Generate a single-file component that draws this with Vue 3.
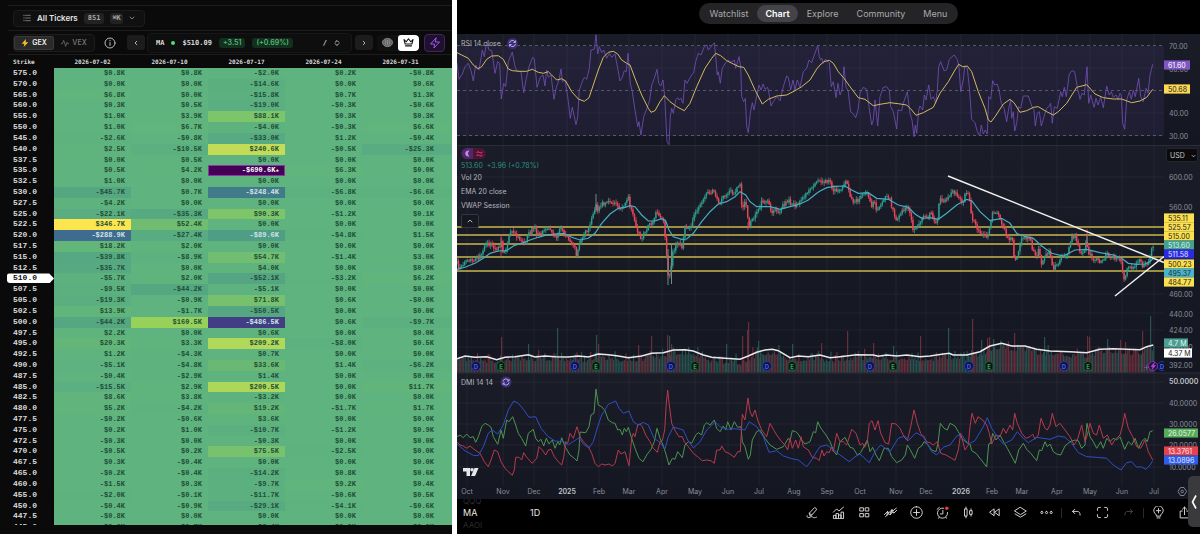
<script setup>
import { ref } from 'vue'

const expiries = ['2026-07-02', '2026-07-10', '2026-07-17', '2026-07-24', '2026-07-31']
const spot = '510.0'
const mode = ref('gex')
const tab = ref('Chart')
const tabs = ['Watchlist', 'Chart', 'Explore', 'Community', 'Menu']

const raw = `
575.0 $0.8K $0.8K -$2.0K $0.2K -$0.8K
570.0 $0.0K $0.0K -$14.6K $0.0K $0.6K
565.0 $6.8K $0.0K -$15.8K $0.7K $1.3K
560.0 $0.3K $0.5K -$19.0K -$0.3K -$0.6K
555.0 $1.0K $3.9K $88.1K $0.3K $0.3K
550.0 $1.0K $6.7K -$4.0K -$0.3K $6.6K
545.0 -$2.6K -$0.8K -$33.0K $1.2K -$0.4K
540.0 $2.5K -$10.5K $240.6K -$0.5K -$25.3K
537.5 $0.0K $0.5K $0.0K $0.0K $0.0K
535.0 $0.5K $4.2K -$690.6K $6.3K $0.0K
532.5 $1.0K $0.0K $0.0K $0.0K $0.0K
530.0 -$45.7K $0.7K -$248.4K -$6.8K -$6.6K
527.5 -$4.2K $0.0K $0.0K $0.0K $0.0K
525.0 -$22.1K -$35.3K $90.3K -$1.2K $0.1K
522.5 $346.7K $52.4K $0.0K $0.0K $0.0K
520.0 -$288.9K -$27.4K -$89.6K -$4.8K $1.5K
517.5 $18.2K $2.0K $0.0K $0.0K $0.0K
515.0 -$39.8K -$8.9K $54.7K -$1.4K $3.0K
512.5 -$35.7K $0.0K $4.0K $0.0K $0.0K
510.0 -$5.7K $2.0K -$52.1K -$3.2K $6.2K
507.5 -$9.5K -$44.2K -$5.1K $0.0K $0.0K
505.0 -$19.3K -$0.9K $71.8K $0.6K -$0.0K
502.5 $13.9K -$1.7K -$50.5K $0.0K $0.0K
500.0 -$44.2K $160.5K -$486.5K $0.6K -$9.7K
497.5 $2.2K $0.0K $0.6K $0.0K $0.0K
495.0 $20.3K $3.3K $209.2K -$8.0K $0.5K
492.5 $1.2K -$4.3K $0.7K $0.0K $0.0K
490.0 -$5.1K -$4.8K $33.6K $1.4K -$6.2K
487.5 -$0.4K -$2.9K $1.4K $0.0K $0.0K
485.0 -$15.5K $2.9K $200.5K $0.0K $11.7K
482.5 $8.6K $3.8K -$3.2K $0.0K $0.0K
480.0 $5.2K -$4.2K $19.2K -$1.7K $1.7K
477.5 -$0.2K -$0.6K $3.6K $0.0K $0.0K
475.0 $0.2K $1.0K -$10.7K -$1.2K $0.9K
472.5 -$0.3K $0.0K -$0.3K $0.0K $0.0K
470.0 -$0.5K $0.2K $75.5K -$2.5K $0.0K
467.5 $0.3K -$0.4K $0.0K $0.0K $0.0K
465.0 -$0.2K -$0.4K -$14.2K $0.8K $0.6K
460.0 -$1.5K $0.3K -$9.7K $9.2K $0.4K
455.0 -$2.0K -$0.1K -$11.7K -$0.6K $0.5K
450.0 -$0.4K -$0.9K -$29.1K -$4.1K -$0.6K
447.5 -$0.8K $0.0K $0.0K $0.0K $0.0K
445.0 -$0.6K $0.7K -$2.4K $0.0K $0.0K`

// viridis-like stops, in $K
const stops = [
  [-690, 68, 1, 84],
  [-486, 65, 62, 132],
  [-289, 63, 108, 142],
  [-248, 65, 123, 138],
  [-90, 80, 157, 134],
  [-40, 86, 168, 130],
  [0, 94, 179, 126],
  [20, 100, 182, 120],
  [90, 126, 197, 106],
  [160, 152, 209, 90],
  [240, 194, 220, 88],
  [347, 253, 229, 80],
]

function heat(v) {
  if (v <= stops[0][0]) return 'rgb(68, 1, 84)'
  for (let i = 1; i < stops.length; i++) {
    const a = stops[i - 1]
    const b = stops[i]
    if (v <= b[0]) {
      const t = (v - a[0]) / (b[0] - a[0])
      return `rgb(${[1, 2, 3].map((k) => Math.round(a[k] + (b[k] - a[k]) * t)).join(', ')})`
    }
  }
  return 'rgb(253, 229, 80)'
}

const rows = raw
  .trim()
  .split('\n')
  .map((line) => {
    const [strike, ...vals] = line.split(' ')
    return {
      strike,
      cells: vals.map((text) => {
        const v = parseFloat(text.replace(/[$K]/g, ''))
        return { text, bg: heat(v), light: v < -80, king: v < -600 }
      }),
    }
  })

// --- chart series -------------------------------------------------------
// Points are in thirds of a unit; the second half of each series starts at SPLIT.
const SPLIT = 1095
const parse = (s) => s.trim().split(/\s+/).map((p) => p.split(',').map(Number))
function series(left, right, top) {
  return [...parse(left), ...parse(right).map(([x, y]) => [x + SPLIT, y])].map(([x, y]) => [
    455 + x / 3,
    top + y / 3,
  ])
}
const poly = (pts) => pts.map(([x, y]) => `${x.toFixed(1)},${y.toFixed(1)}`).join(' ')

const rsi = series(
  `6,190 12,238 22,222 30,200 40,190 48,212 55,243 62,195 68,205 72,210 82,150 88,170 95,125 102,150 110,152 120,220 128,185 134,190 139,297 146,250 152,260 160,185 172,156 180,200 186,214 198,215 206,278 214,235 222,200 233,172 238,176 246,262 256,232 264,225 270,258 275,210 280,232 288,225 297,298 304,262 312,240 318,207 322,245 330,240 338,290 346,355 352,322 363,374 368,350 373,270 382,245 388,232 395,238 403,205 408,150 418,148 423,104 428,162 433,140 440,158 446,150 455,175 463,160 470,172 480,162 488,205 495,243 502,232 508,212 514,215 519,160 526,250 532,275 540,330 548,380 552,365 558,405 566,350 574,330 584,300 590,255 598,235 606,208 611,250 617,258 624,240 629,290 636,425 642,434 646,350 650,325 655,340 662,300 668,293 672,300 678,295 684,310 690,240 696,250 704,235 712,222 716,218 722,185 730,160 738,165 748,140 755,135 760,150 768,140 778,128 782,170 787,225 790,215 796,250 802,205 812,188 820,180 828,187 838,180 842,205 852,170 857,200 860,290 866,305 871,295 875,380 880,398 886,340 892,308 897,330 904,295 912,255 918,270 924,252 930,268 938,262 942,280 948,318 955,305 965,290 975,302 985,260 995,228 1000,232 1007,270 1014,240 1020,270 1027,240 1035,262 1045,215 1055,205 1062,180 1070,188 1078,165 1088,137 1093,170`,
  `2,180 5,175 10,190 16,178 28,188 34,260 40,245 48,293 54,250 60,285 66,270 72,200 78,262 84,270 92,335 100,342 107,353 114,330 120,280 130,262 140,268 147,320 155,375 160,360 165,300 173,378 180,290 190,262 200,260 208,272 212,320 220,335 230,387 234,330 245,332 250,310 262,275 270,340 276,360 282,410 286,375 290,400 296,330 300,318 308,330 313,285 318,300 326,255 333,298 340,290 347,310 352,270 356,200 362,185 372,212 380,210 388,178 402,165 412,178 417,200 422,275 430,240 434,200 442,205 448,260 455,358 465,368 472,395 479,408 484,375 490,402 496,390 502,402 506,290 512,298 518,242 524,255 532,252 537,270 544,310 552,325 560,365 566,325 572,300 575,355 580,335 584,393 590,370 596,320 602,325 610,288 625,288 636,320 642,330 646,378 652,340 658,335 664,378 672,350 680,325 686,320 692,310 697,370 703,320 712,325 722,275 727,290 733,262 739,290 748,222 756,212 764,215 772,262 780,298 786,280 793,285 801,200 806,310 812,285 822,322 828,295 834,315 842,292 850,323 860,258 868,285 874,275 880,292 888,285 894,298 900,280 904,285 908,370 914,388 920,300 928,275 934,298 940,270 946,290 956,235 962,290 970,305 978,265 984,280 990,225 998,193`,
  0,
)
const rsiMa = series(
  `6,158 20,165 40,175 55,195 68,206 80,200 95,178 110,168 130,167 145,178 160,207 172,212 195,214 215,214 232,208 250,217 265,220 280,215 290,225 305,240 320,236 332,243 350,275 370,297 388,304 402,293 415,255 430,210 445,172 460,157 475,154 488,162 500,180 515,190 525,195 540,235 560,285 580,325 588,337 600,332 615,305 628,287 645,305 665,320 688,332 705,310 725,260 750,205 770,175 782,160 797,167 815,182 835,192 852,200 866,202 880,225 900,270 922,312 940,298 965,288 995,285 1020,272 1040,260 1065,240 1085,207`,
  `0,195 12,185 28,181 40,190 55,215 72,235 90,260 115,293 135,298 160,317 180,313 210,308 235,311 260,315 275,330 288,346 310,338 340,322 360,280 385,245 405,210 416,193 428,200 442,198 455,215 475,275 495,325 505,360 513,366 525,350 550,312 570,298 582,308 600,337 620,332 640,322 655,320 680,335 700,345 715,335 740,310 770,262 800,254 825,282 850,293 880,297 905,297 935,308 960,303 980,292 998,268`,
  0,
)
const price = series(
  `6,370 12,388 20,372 30,368 40,366 48,360 58,365 66,355 75,350 85,325 92,308 98,312 106,312 115,322 124,328 133,325 139,300 143,345 150,325 158,315 164,280 175,272 183,285 190,292 198,300 206,310 214,298 222,282 232,268 240,262 246,285 252,280 258,292 264,275 272,265 280,268 288,265 296,290 304,290 312,270 320,262 328,285 336,288 345,305 352,310 358,320 364,343 370,325 376,300 384,290 392,275 402,268 408,240 416,222 422,195 428,210 434,205 440,185 446,195 454,185 462,190 470,188 480,190 488,195 496,205 504,200 512,188 520,172 525,205 532,220 540,250 548,275 558,295 566,285 574,270 582,258 590,250 598,240 606,210 612,230 618,240 624,235 628,270 632,310 636,370 642,420 647,400 652,330 658,330 664,315 670,308 676,310 682,322 690,260 698,262 706,262 714,240 722,215 730,200 740,190 750,165 758,155 768,160 776,145 782,165 790,188 798,182 806,172 816,165 826,155 836,158 844,148 855,132 860,195 866,200 870,185 876,210 882,265 888,240 896,235 904,220 912,205 920,185 928,190 938,185 944,200 948,222 956,215 966,212 976,215 984,195 992,188 1000,182 1008,190 1014,185 1022,198 1028,195 1036,182 1044,170 1054,160 1064,145 1074,140 1084,125 1092,112`,
  `0,120 10,128 20,122 30,125 38,152 46,148 56,152 66,145 76,120 84,140 92,170 100,188 110,182 118,180 126,160 136,155 146,168 154,200 162,185 172,215 180,195 190,175 202,165 210,180 218,210 230,240 240,220 252,212 262,200 270,220 278,265 286,275 294,250 302,240 312,230 322,235 332,215 340,240 350,250 356,200 362,172 372,188 382,175 392,160 402,155 412,165 420,175 428,195 436,155 443,160 448,180 454,230 462,240 470,262 480,275 490,285 500,295 508,260 516,225 526,215 534,218 542,245 552,260 560,290 568,300 576,290 584,365 592,350 600,310 610,290 620,295 630,295 638,330 648,355 656,320 664,375 672,350 682,340 690,340 698,390 706,375 716,370 724,345 732,345 740,345 748,315 756,290 766,290 774,320 784,345 792,330 800,300 806,350 812,340 822,365 832,355 842,370 852,360 862,340 872,355 880,350 888,355 896,350 904,370 910,410 914,430 920,395 928,370 936,385 944,375 952,370 960,350 968,380 976,375 984,365 990,350 998,318`,
  140,
)
const ema = series(
  `6,388 30,382 60,370 85,355 105,340 130,333 155,332 175,318 200,310 225,300 250,292 275,285 300,282 325,280 350,292 375,300 400,295 420,280 440,250 465,222 490,205 510,202 525,197 540,200 560,225 580,243 600,243 620,236 632,243 642,270 655,290 680,298 695,297 715,280 740,245 765,215 790,192 815,185 840,170 855,155 872,165 885,185 905,200 925,200 945,200 975,208 1005,200 1035,192 1060,180 1085,160`,
  `0,153 20,143 45,139 75,138 95,150 115,160 145,158 170,175 205,178 235,195 265,202 285,222 305,235 330,233 355,238 380,220 410,195 440,178 455,182 480,215 510,242 545,235 570,250 590,280 610,288 640,295 665,318 695,340 730,348 765,330 800,328 840,338 880,345 905,355 925,370 950,373 975,372 990,365 1000,355`,
  140,
)
const volMa = series(
  `6,656 30,648 60,652 95,650 125,659 150,652 180,650 220,644 240,651 270,648 300,650 340,651 370,648 400,651 430,642 460,644 490,648 520,653 560,648 590,640 625,638 655,630 690,629 715,633 745,645 770,652 810,655 855,658 880,648 905,637 930,630 952,628 970,632 1005,653 1030,648 1060,650 1090,646`,
  `0,645 30,653 60,650 110,644 160,645 175,649 200,645 230,648 260,645 300,650 330,648 370,642 388,640 400,645 440,645 480,635 510,618 545,610 575,618 615,618 650,628 690,633 750,635 800,638 840,628 880,626 920,628 960,629 980,620 1000,615`,
  140,
)
const adx = series(
  `6,222 30,242 55,256 70,257 85,230 100,190 112,180 128,192 145,165 160,120 176,93 190,100 205,118 222,142 242,140 258,175 280,200 300,213 325,215 340,224 365,208 372,204 385,222 402,234 415,215 428,170 440,135 460,103 482,93 492,115 505,130 522,123 535,155 550,165 565,157 580,165 597,205 612,215 630,236 640,200 655,171 685,180 698,210 715,234 735,215 755,180 780,155 795,170 815,178 835,176 858,178 870,180 883,155 905,170 925,200 942,247 965,242 985,258 1010,266 1030,270 1055,290 1070,270 1088,240`,
  `0,230 20,225 40,238 60,255 88,275 105,260 120,252 148,278 165,245 182,225 210,245 235,205 255,198 265,212 288,188 310,200 335,245 350,255 370,232 390,225 410,198 425,195 445,222 465,212 490,170 502,143 515,175 535,205 550,222 575,210 592,185 605,200 625,218 650,202 670,205 690,208 715,198 735,202 755,220 775,248 800,260 830,262 860,265 880,285 903,300 920,278 935,275 950,292 962,290 978,298 990,285 998,272`,
  370,
)
const diPlus = series(
  `6,200 15,195 25,203 35,192 45,203 55,200 62,217 70,200 80,170 90,160 100,165 108,172 115,200 128,223 138,180 145,205 155,150 162,155 173,140 182,165 190,190 200,205 212,228 220,190 235,178 242,205 250,215 258,208 266,228 274,205 282,222 292,210 300,235 308,215 314,225 320,203 330,230 345,255 358,265 366,273 372,240 375,186 392,188 402,170 408,135 417,130 423,57 430,105 440,110 450,122 460,150 472,158 480,160 488,180 495,178 502,195 508,175 514,185 520,172 530,205 540,235 552,265 564,275 575,255 588,238 598,215 606,175 615,205 624,225 632,250 642,285 652,265 660,268 668,245 682,263 690,225 700,215 710,220 722,195 730,188 740,195 748,165 755,158 765,165 778,150 785,175 795,185 805,168 812,180 818,155 828,180 838,155 848,172 858,170 862,215 870,230 880,268 886,255 892,210 905,185 915,180 930,205 945,225 965,238 985,230 1000,205 1005,212 1012,182 1022,185 1028,190 1040,210 1050,222 1065,215 1075,185 1082,188 1088,155`,
  `0,170 8,182 18,195 30,215 42,245 50,255 60,215 75,202 90,232 100,235 112,255 122,248 142,210 150,245 158,232 168,255 178,272 192,235 205,235 215,260 230,278 245,270 256,255 262,225 270,238 284,265 295,235 305,228 312,215 322,222 335,240 348,245 354,220 361,160 372,175 382,180 390,160 405,168 415,185 425,205 440,218 450,222 455,242 468,250 480,265 500,291 506,222 512,220 518,190 528,210 540,195 552,218 562,235 570,250 586,280 596,240 610,220 620,238 632,250 650,272 658,240 665,242 675,215 682,230 690,222 700,245 710,252 722,255 735,228 750,215 765,210 775,212 785,235 795,225 801,160 810,200 820,215 830,235 842,215 850,235 860,205 870,215 880,205 890,210 900,200 914,238 925,215 935,225 945,205 956,235 965,215 975,205 982,215 990,185 998,182`,
  370,
)
const diMinus = series(
  `6,215 15,225 25,228 35,235 45,228 60,240 75,250 88,275 100,290 108,270 118,240 128,245 138,275 150,295 160,305 172,316 178,300 182,262 192,262 200,270 206,248 215,262 232,280 245,265 252,230 262,240 272,255 280,240 288,238 298,260 310,275 320,285 326,262 332,215 338,220 345,190 355,205 366,170 375,200 385,215 400,230 410,250 420,280 430,290 440,282 450,285 462,282 472,288 480,280 490,240 498,252 510,245 522,287 530,205 535,190 540,200 548,165 555,162 562,170 572,195 585,215 595,235 607,247 615,215 622,212 629,180 634,100 638,60 643,105 650,160 662,185 672,200 682,200 688,215 700,230 715,250 730,262 742,272 755,270 768,272 778,280 785,240 795,240 800,228 810,245 822,250 838,262 848,245 856,245 862,132 870,150 879,84 885,125 892,140 900,120 908,150 920,180 935,200 945,160 955,178 965,195 980,215 990,225 998,240 1005,205 1012,235 1022,210 1030,235 1038,200 1045,230 1060,240 1072,262 1085,265 1092,272`,
  `0,262 6,240 12,258 20,245 28,248 34,232 40,245 50,190 60,215 70,215 80,225 95,178 108,190 120,225 128,220 134,232 142,215 148,160 156,152 165,180 174,152 182,190 195,218 206,222 215,160 228,162 240,175 252,200 262,212 272,170 282,120 292,160 302,190 312,200 320,215 330,218 340,225 352,215 362,250 378,255 395,265 405,271 415,240 422,190 435,240 445,225 450,170 456,130 466,160 474,140 488,150 500,165 508,190 515,222 528,195 540,200 550,175 558,190 570,165 578,180 584,130 592,160 605,190 618,205 630,200 638,192 645,208 655,195 663,145 675,175 682,180 690,165 697,130 708,170 720,160 735,180 750,200 762,225 772,210 785,165 795,215 802,195 810,160 820,190 830,195 838,165 850,205 862,195 875,225 886,208 900,195 908,165 914,130 925,175 938,200 950,230 962,235 975,210 985,245 998,270`,
  370,
)

// small deterministic generator so bars look the same on every load
let seed = 7
function rand() {
  seed = (seed * 16807) % 2147483647
  return seed / 2147483647
}

function valueAt(pts, x) {
  for (let i = 1; i < pts.length; i++) {
    if (x <= pts[i][0]) {
      const [x0, y0] = pts[i - 1]
      const [x1, y1] = pts[i]
      return y0 + ((y1 - y0) * (x - x0)) / (x1 - x0 || 1)
    }
  }
  return pts[pts.length - 1][1]
}

const STEP = 1.53
const candles = []
const volumes = []
let prev = valueAt(price, 457)
for (let x = 457; x < 1154; x += STEP) {
  const close = valueAt(price, x) + (rand() - 0.5) * 4
  candles.push({
    x,
    up: close < prev,
    top: Math.min(prev, close),
    h: Math.max(1, Math.abs(prev - close)),
    hi: Math.min(prev, close) - 0.5 - rand() * 3,
    lo: Math.max(prev, close) + 0.5 + rand() * 3,
  })
  prev = close
  const base = valueAt(volMa, x)
  volumes.push({ x, up: rand() > 0.48, y: base + 4 - rand() * rand() * 12 + rand() * 2 })
}
const candleUp = candles.filter((c) => c.up)
const candleDown = candles.filter((c) => !c.up)

const spikes = [
  [501, 337, 0], [528, 344, 1], [557, 328, 1], [596, 335, 1], [598, 344, 0], [638, 345, 0],
  [651, 336, 0], [667, 335, 0], [669, 336, 1], [671, 344, 0], [726, 344, 1], [742, 336, 0],
  [747, 330, 0], [748, 322, 0], [758, 341, 1], [792, 344, 1], [821, 343, 0], [847, 331, 0],
  [873, 343, 0], [893, 346, 1], [920, 336, 0], [948, 328, 1], [972, 319, 0], [981, 340, 1],
  [987, 338, 0], [989, 337, 0], [993, 339, 1], [1014, 333, 0], [1044, 337, 1], [1087, 336, 0],
  [1089, 337, 0], [1107, 339, 1], [1120, 340, 0], [1125, 342, 0], [1142, 331, 0], [1150, 316, 1],
]

const levels = [227, 235, 244, 257, 271]
const months = [
  [467, 'Oct'], [503, 'Nov'], [534, 'Dec'], [567, '2025'], [599, 'Feb'], [629, 'Mar'],
  [662, 'Apr'], [695, 'May'], [728, 'Jun'], [759, 'Jul'], [794, 'Aug'], [827, 'Sep'],
  [860, 'Oct'], [896, 'Nov'], [926, 'Dec'], [961, '2026'], [992, 'Feb'], [1022, 'Mar'],
  [1057, 'Apr'], [1090, 'May'], [1122, 'Jun'], [1154, 'Jul'],
]
const gridY = [68, 113, 177, 207, 240, 294, 313, 330, 347, 365, 382, 403, 424, 445, 467]
const axis = [
  [46, '70.00'], [69, '60.00'], [113, '40.00'], [136, '30.00'], [177, '600.00'], [207, '560.00'],
  [294, '460.00'], [314, '440.00'], [330, '424.00'], [347, '408.00'], [365, '392.00'],
  [403, '40.0000'], [424, '30.0000'], [445, '20.0000'], [467, '10.0000'],
]
const tags = [
  { y: 65, text: '61.60', bg: '#7e57c2', fg: '#fff', w: 26 },
  { y: 89, text: '50.68', bg: '#fdd853', fg: '#222', w: 26 },
  { y: 218, text: '535.11', bg: '#fbe04f', fg: '#222', w: 30 },
  { y: 227, text: '525.57', bg: '#fbe04f', fg: '#222', w: 30 },
  { y: 236, text: '515.00', bg: '#fbe04f', fg: '#222', w: 30 },
  { y: 245, text: '513.60', bg: '#44a18d', fg: '#d8f3ec', w: 30 },
  { y: 254, text: '511.58', bg: '#2a2be0', fg: '#e6e6ff', w: 30 },
  { y: 264, text: '500.23', bg: '#fbe04f', fg: '#222', w: 30 },
  { y: 273, text: '495.37', bg: '#4bb3c8', fg: '#14323a', w: 30 },
  { y: 282, text: '484.77', bg: '#fbe04f', fg: '#222', w: 30 },
  { y: 343, text: '4.7 M', bg: '#4a9f92', fg: '#e3f5f1', w: 24 },
  { y: 353, text: '4.37 M', bg: '#ffffff', fg: '#222', w: 28 },
  { y: 433, text: '26.0577', bg: '#57ab5a', fg: '#e6f6e6', w: 34 },
  { y: 451, text: '13.3761', bg: '#e5424f', fg: '#ffe6e8', w: 34 },
  { y: 460, text: '13.0896', bg: '#2f5ce6', fg: '#e4ebff', w: 34 },
]
const dividends = [476, 575, 671, 767, 870, 969, 1064, 1162]
const earnings = [501, 596, 695, 792, 893, 989, 1088]

const tools = [
  { name: 'Draw', d: 'M5.5 13.5 4.5 10 12 2l3 2.5-7 8zM4.5 10l3.5 2.5M1.5 13.5c-1 3 2 3 4 2s3-1 4 0 3 1 5 0' },
  { name: 'Indicators', d: 'M2 8.5 6.5 4l3 3L16 1.5M2 17v-4h3.5v4zM5.5 17v-6.5H9V17zM9 17v-4.5h3.5V17zM12.5 17V8.5H16V17z' },
  { name: 'Layouts', d: 'M3 2.5h4.5V7H3zM10.5 2.5H15V7h-4.5zM3 10.5h4.5V15H3zM10.5 10.5H15V15h-4.5z' },
  { name: 'Compare', d: 'M.5 12 5 7.5l1.5 2L11 5l1 2 5-4M2 15l4.500-4.500L8 12.500 12.500 8l1 2L17.500 6M5 7.500 4 13M11 5l-2 6.500M12 7l-3 2M6.500 9.500 5.500 11' },
  { name: 'Add', d: 'M9 1a8 8 0 1 0 0 16A8 8 0 0 0 9 1zM9 5v8M5 9h8' },
  { name: 'Alerts', d: 'M10.5 3A7 7 0 1 0 16 9M9.5 6v5H6M1.5 4.500l3-2.500M4.500 15.500l-1 1.500M13.500 15.500l1 1.500', dot: true },
  { name: 'Chart type', d: 'M5.5 1.5v2.500M5.500 14v2.500M4 4h3v10H4zM12.500 4v2.500M12.500 11.500V14M11 6.500h3v5h-3z' },
  { name: 'Replay', d: 'M8.5 4.5v9L2.5 9zM15.5 4.5v9L9.5 9z' },
  { name: 'Layers', d: 'M9 2 17 7 9 12 1 7zM1.5 11 9 15.5l7.5-4.5' },
  { name: 'More', d: 'M2.5 7.5a1.5 1.5 0 1 0 0 3 1.5 1.5 0 0 0 0-3zM9 7.5a1.5 1.5 0 1 0 0 3 1.5 1.5 0 0 0 0-3zM15.5 7.5a1.5 1.5 0 1 0 0 3 1.5 1.5 0 0 0 0-3z' },
  { name: 'Undo', d: 'M6.5 4.5 3.5 7.5l3 3M3.5 7.5H10c3 0 4 2 4 5', sep: true },
  { name: 'Fullscreen', d: 'M2 6V4a2 2 0 0 1 2-2h2M12 2h2a2 2 0 0 1 2 2v2M16 12v2a2 2 0 0 1-2 2h-2M6 16H4a2 2 0 0 1-2-2v-2' },
  { name: 'Redo', d: 'M11.5 4.5l3 3-3 3M14.5 7.5H8c-3 0-4 2-4 5', dim: true },
  { name: 'Ideas', d: 'M6 13.5V12a6.5 6.5 0 1 1 6 0v1.5zM9 3.5v6M6 6.5h6M7 16.5h4', sep: true },
  { name: 'Share', d: 'M6 7H3v9.5h12V7h-3M9 12V1.5M6 4.5l3-3 3 3' },
]
</script>

<template>
  <div class="page">
    <section class="gex">
      <div class="gex__top">
        <button class="pill">
          <svg class="ico" viewBox="0 0 12 12"><path d="M1 2h1M1 6h1M1 10h1M4 2h7M4 6h7M4 10h7" /></svg>
          <span class="pill__title">All Tickers</span>
          <span class="badge">851</span>
          <span class="badge">⌘K</span>
          <svg class="ico ico--sm" viewBox="0 0 12 12"><path d="m2 4 4 4 4-4" /></svg>
        </button>
      </div>

      <div class="gex__bar">
        <div class="switch">
          <button class="switch__btn" :class="{ 'is-on': mode === 'gex' }" @click="mode = 'gex'">
            <svg class="bolt" viewBox="0 0 12 12"><path d="M7.5 0 1 7h4l-1 5 7-7H7z" /></svg>GEX
          </button>
          <button class="switch__btn" :class="{ 'is-on': mode === 'vex' }" @click="mode = 'vex'">
            <svg class="ico" viewBox="0 0 12 12"><path d="M0 7h2l2-5 3 9 2-6 1 2h2" /></svg>VEX
          </button>
        </div>
        <button class="plain" aria-label="Info">
          <svg class="ico ico--lg" viewBox="0 0 12 12"><circle cx="6" cy="6" r="5" /><path d="M6 5.5v3M6 3.2v.6" /></svg>
        </button>
        <button class="sq" aria-label="Previous">
          <svg class="ico ico--sm" viewBox="0 0 12 12"><path d="M7.5 2.5 4 6l3.5 3.5" /></svg>
        </button>
        <div class="quote">
          <strong>MA</strong>
          <i class="quote__dot"></i>
          <strong>$510.09</strong>
          <span class="gain">+3.51</span>
          <span class="gain">(+0.69%)</span>
          <span class="quote__end">/</span>
          <svg class="ico ico--sm" viewBox="0 0 12 12"><path d="M2.5 4.5 6 1l3.5 3.5M2.5 7.5 6 11l3.5-3.5" /></svg>
        </div>
        <button class="sq" aria-label="Next">
          <svg class="ico ico--sm" viewBox="0 0 12 12"><path d="M4.5 2.5 8 6 4.5 9.5" /></svg>
        </button>
        <div class="views">
          <button class="views__btn" aria-label="Coins">
            <svg class="coin" viewBox="0 0 12 12"><ellipse cx="6" cy="6" rx="5.5" ry="4.5" /><path d="M4 3.5v5M6 3v6M8 3.5v5" /></svg>
          </button>
          <button class="views__btn is-on" aria-label="Crown">
            <svg class="crown" viewBox="0 0 14 12"><path d="m1 2 1.5 6h9L13 2 10 5 7 1 4 5zM2.5 10.5h9" /></svg>
          </button>
        </div>
        <button class="zap" aria-label="Live">
          <svg class="ico ico--lg" viewBox="0 0 12 12"><path d="M7 1 1.5 7H5.5L5 11l5.5-6H6.5z" /></svg>
        </button>
      </div>

      <div class="heat">
        <table>
          <thead>
            <tr>
              <th scope="col" class="heat__first">Strike</th>
              <th v-for="e in expiries" :key="e" scope="col">{{ e }}</th>
            </tr>
          </thead>
          <tbody>
            <tr v-for="r in rows" :key="r.strike">
              <th scope="row"><span :class="{ spot: r.strike === spot }">{{ r.strike }}</span></th>
              <td
                v-for="(c, i) in r.cells"
                :key="i"
                :class="{ light: c.light, king: c.king }"
                :style="{ backgroundColor: c.bg }"
              >{{ c.text }}<span v-if="c.king" class="star">★</span></td>
            </tr>
          </tbody>
        </table>
      </div>
    </section>

    <section class="tv">
      <nav class="tabs">
        <a
          v-for="t in tabs"
          :key="t"
          href="#"
          class="tabs__item"
          :class="{ 'is-on': tab === t }"
          @click.prevent="tab = t"
        >{{ t }}</a>
      </nav>

      <div class="chart">
        <svg class="chart__svg" viewBox="457 34 743 465">
          <defs>
            <linearGradient id="pane" x1="0" y1="0" x2="0" y2="1">
              <stop offset="0" stop-color="#1a1c28" />
              <stop offset="1" stop-color="#141722" />
            </linearGradient>
          </defs>
          <rect x="457" y="34" width="743" height="111" fill="url(#pane)" />
          <rect x="457" y="145" width="743" height="228" fill="url(#pane)" />
          <rect x="457" y="373" width="743" height="126" fill="url(#pane)" />
          <rect x="457" y="46" width="707" height="90" class="band" />

          <g class="grid">
            <line v-for="[x] in months" :key="x" :x1="x" :x2="x" y1="34" y2="486" />
            <line v-for="y in gridY" :key="y" x1="457" x2="1164" :y1="y" :y2="y" />
          </g>
          <path class="split" d="M457 145.5H1200M457 373H1200" />
          <path class="dash" d="M457 45.5H1164M457 90.5H1164M457 135.5H1164" />

          <polyline class="rsi" :points="poly(rsi)" />
          <polyline class="rsi-ma" :points="poly(rsiMa)" />

          <g class="vol">
            <rect
              v-for="v in volumes"
              :key="v.x"
              :x="v.x"
              :y="v.y"
              width="1.2"
              :height="372.5 - v.y"
              :class="v.up ? 'up' : 'down'"
            />
            <rect
              v-for="[x, y, up] in spikes"
              :key="`s${x}`"
              :x="x"
              :y="y"
              width="1.2"
              :height="372 - y"
              :class="up ? 'up' : 'down'"
            />
          </g>
          <polyline class="vol-ma" :points="poly(volMa)" />

          <path v-for="y in levels" :key="y" class="level" :d="`M457 ${y}H1164`" />

          <g class="candle up">
            <path v-for="c in candleUp" :key="c.x" :d="`M${c.x} ${c.hi}V${c.lo}`" />
            <rect v-for="c in candleUp" :key="`b${c.x}`" :x="c.x - 0.7" :y="c.top" width="1.4" :height="c.h" />
          </g>
          <g class="candle down">
            <path v-for="c in candleDown" :key="c.x" :d="`M${c.x} ${c.hi}V${c.lo}`" />
            <rect v-for="c in candleDown" :key="`b${c.x}`" :x="c.x - 0.7" :y="c.top" width="1.4" :height="c.h" />
            <path d="M501 234V256M1087 229V247M748 222V230" />
          </g>
          <path class="gap-up" d="M668 285V249M671.5 284V243M596 194V212M1087 236V244" />
          <polyline class="ema" :points="poly(ema)" />
          <path class="trend" d="M948 176 1164 262.5M1115 296 1164 256.5" />

          <g v-for="x in dividends" :key="`d${x}`" class="mark mark--d">
            <circle :cx="x" cy="366" r="4.5" />
            <text :x="x" y="368.5">D</text>
          </g>
          <g v-for="x in earnings" :key="`e${x}`" class="mark mark--e">
            <path :d="`M${x - 4} 363.5l4-2.5 4 2.5v6.5h-8z`" />
            <text :x="x" y="369">E</text>
          </g>
          <circle cx="1153" cy="366" r="4.5" class="flash-bg" />
          <path class="flash" d="M1154.5 362.5 1151 366.5h2l-1 3 3.5-4h-2zM1146.5 365v5M1144 367.5h5" />
          <rect x="1164" y="360" width="6" height="12" fill="#151823" />

          <polyline class="di-plus" :points="poly(diPlus)" />
          <polyline class="di-minus" :points="poly(diMinus)" />
          <polyline class="adx" :points="poly(adx)" />

          <g class="legend">
            <text x="461" y="46">RSI 14 close</text>
            <text x="461" y="180">Vol 20</text>
            <text x="461" y="194">EMA 20 close</text>
            <text x="461" y="208">VWAP Session</text>
            <text x="461" y="385">DMI 14 14</text>
          </g>
          <text x="461" y="168" class="last">513.60&nbsp; +3.96 (+0.78%)</text>

          <g v-for="[x, y] in [[512.5, 43.5], [506, 382]]" :key="x" class="sync" :transform="`translate(${x} ${y})`">
            <circle r="5.5" />
            <path d="M-3 -.5A3 3 0 0 1 2.6-1.5M3 .5A3 3 0 0 1-2.6 1.5M3-3v2H1M-3 3V1h2" />
          </g>

          <path d="M467 148h6v11h-6a5.5 5.5 0 0 1 0-11z" fill="#50286a" />
          <path d="M473 148h7.5a5.5 5.5 0 0 1 0 11H473z" fill="#4c1633" />
          <path d="M469.5 150.8a3 3 0 1 0 0 5.4 3.2 3.2 0 0 1 0-5.4z" fill="#c988e8" />
          <path class="approx" d="M476.5 152.5q1.5-1.5 3 0t3-.5M476.5 155.5q1.5-1.5 3 0t3-.5" />

          <path class="logo" d="M463 468h7v8h-3.5v-4.5H463zM474.5 468h4l-3.4 8h-4z" />
          <circle cx="472" cy="469.8" r="1.8" class="logo" />

          <g class="axis">
            <text v-for="[y, t] in axis" :key="`a${y}`" x="1169" :y="y + 2.5">{{ t }}</text>
            <text x="1169" y="384" class="strong">50.0000</text>
          </g>
          <g v-for="t in tags" :key="t.text" class="tag">
            <rect x="1164" :y="t.y - 4.6" :width="t.w" height="9.2" :fill="t.bg" />
            <text x="1168" :y="t.y + 2.5" :fill="t.fg">{{ t.text }}</text>
          </g>
          <g class="axis months">
            <text v-for="[x, t] in months" :key="`m${x}`" :x="x" y="494" :class="{ strong: t.startsWith('20') }">{{ t }}</text>
          </g>
          <path class="hex" d="M1180.5 487.5h3.5l2.5 4-2.5 4h-3.5l-2.5-4z" />
          <circle class="hex" cx="1182.2" cy="491.5" r="1.3" />
        </svg>

        <select class="currency" aria-label="Currency">
          <option>USD</option>
        </select>
        <svg class="currency__chev" viewBox="0 0 6 4"><path d="m1 1 2 2 2-2" /></svg>
        <button class="fold" aria-label="Collapse legend">
          <svg class="ico ico--sm" viewBox="0 0 12 12"><path d="m2 8 4-4 4 4" /></svg>
        </button>
      </div>

      <footer class="dock">
        <div class="wheel">
          <span class="wheel__ghost">QQQ</span>
          <button class="wheel__cur">MA</button>
          <span class="wheel__ghost">AAOI</span>
        </div>
        <button class="wheel__cur dock__tf">1D</button>
        <div class="dock__tools">
          <button
            v-for="t in tools"
            :key="t.name"
            class="tool"
            :class="{ 'tool--dim': t.dim, 'tool--sep': t.sep }"
            :aria-label="t.name"
          >
            <svg viewBox="0 0 18 18">
              <path :d="t.d" />
              <circle v-if="t.dot" cx="15" cy="3" r="2.4" class="tool__dot" />
            </svg>
          </button>
        </div>
      </footer>
      <button class="drawer" aria-label="Open panel">
        <svg viewBox="0 0 6 16"><path d="M5 1.5 1.5 8 5 14.5" /></svg>
      </button>
    </section>
  </div>
</template>

<style>
body {
  background: #fff;
}
</style>

<style scoped>
.page {
  display: grid;
  grid-template-columns: 452fr 743fr;
  gap: 5px;
  height: 100vh;
  overflow: hidden;
  font-family: Inter, 'Liberation Sans', sans-serif;
}

button,
select {
  font: inherit;
  color: inherit;
  background: none;
  border: 0;
  padding: 0;
  margin: 0;
}

.ico {
  width: 8px;
  height: 8px;
  fill: none;
  stroke: currentColor;
  stroke-width: 1.2;
  stroke-linecap: round;
  stroke-linejoin: round;
}

.ico--sm {
  width: 6px;
  height: 6px;
  stroke-width: 1.8;
}

.ico--lg {
  width: 12px;
  height: 12px;
  stroke-width: 1;
}

/* left: exposure heat map */
.gex {
  display: flex;
  flex-direction: column;
  min-width: 0;
  min-height: 0;
  padding: 5px 0 9px;
  background: #0a0a0a;
  color: #d8d8d8;
}

.gex__top,
.gex__bar {
  display: flex;
  align-items: center;
  flex: none;
  box-sizing: border-box;
  height: 25px;
  margin-left: 8px;
  padding-left: 5px;
  border-top: 1px solid #1c1c1c;
}

.gex__bar {
  padding-right: 7px;
  border-bottom: 1px solid #1c1c1c;
}

.pill {
  display: flex;
  align-items: center;
  gap: 6px;
  height: 17px;
  padding: 0 9px;
  border: 1px solid #1c1c1c;
  border-radius: 4px;
  background: #101010;
  color: #8a8a8a;
}

.pill__title {
  font-size: 8px;
  font-weight: 600;
  color: #e4e4e4;
}

.badge {
  padding: 1px 4px;
  border-radius: 3px;
  background: #222;
  color: #a8a8a8;
  font: 700 7px/9px 'DejaVu Sans Mono', monospace;
}

.badge + .badge {
  padding: 1px 2px;
}

.switch {
  display: flex;
  align-items: center;
  height: 16px;
  border: 1px solid #1c1c1c;
  border-radius: 4px;
  background: #101010;
}

.switch__btn {
  display: flex;
  align-items: center;
  justify-content: center;
  gap: 3px;
  width: 40px;
  height: 14px;
  border-radius: 3px;
  font-size: 7px;
  font-weight: 600;
  color: #6e6e6e;
}

.switch__btn.is-on {
  background: #2a2a2a;
  box-shadow: inset 0 0 0 1px #3a3a3a;
  color: #eee;
}

.bolt {
  width: 8px;
  height: 8px;
  fill: #f7c325;
}

.plain {
  display: flex;
  margin: 0 11px 0 9px;
  color: #bbb;
}

.sq {
  display: flex;
  align-items: center;
  justify-content: center;
  flex: none;
  width: 18px;
  height: 15px;
  border-radius: 3px;
  background: #1c1c1c;
  color: #bbb;
}

.quote {
  display: flex;
  align-items: center;
  flex: 1;
  gap: 7px;
  height: 18px;
  margin: 0 3px 0 2px;
  padding: 0 11px 0 8px;
  border: 1px solid #171717;
  border-radius: 4px;
  background: #0e0e0e;
  font: 7px 'DejaVu Sans Mono', monospace;
  white-space: nowrap;
}

.quote__dot {
  width: 4px;
  height: 4px;
  border-radius: 50%;
  background: #4ade80;
}

.quote__end {
  margin-left: auto;
  font-weight: 700;
}

.gain {
  padding: 0 4px;
  border-radius: 3px;
  background: #12301d;
  color: #57b877;
  font: 600 7px/10px Inter, sans-serif;
}

.views {
  display: flex;
  margin: 0 5px 0 4px;
  border-radius: 4px;
  overflow: hidden;
  background: #101010;
}

.views__btn {
  display: flex;
  align-items: center;
  justify-content: center;
  width: 21px;
  height: 16px;
}

.views__btn.is-on {
  background: #fff;
  border-radius: 3px;
}

.coin {
  width: 11px;
  height: 11px;
  fill: #666;
  stroke: #999;
  stroke-width: 0.8;
}

.crown {
  width: 11px;
  height: 9px;
  fill: none;
  stroke: #111;
  stroke-width: 1.4;
  stroke-linejoin: round;
}

.zap {
  display: flex;
  align-items: center;
  justify-content: center;
  flex: none;
  width: 21px;
  height: 18px;
  border: 1px solid #42245f;
  border-radius: 4px;
  background: #1f1030;
  color: #9b5de5;
}

.heat {
  flex: 1;
  min-height: 0;
  overflow: hidden;
  font-family: 'Liberation Mono', 'DejaVu Sans Mono', monospace;
}

.heat table,
.heat thead {
  display: block;
}

.heat tr {
  display: grid;
  grid-template-columns: 54fr repeat(4, 77fr) 90fr;
}

.heat tbody {
  display: grid;
  grid-auto-rows: 1fr;
  height: 465px;
}

.heat thead th {
  padding: 0;
  font: 700 6px/13px 'DejaVu Sans Mono', monospace;
  text-align: center;
}

.heat thead th:last-child {
  padding-right: 13px;
}

.heat thead .heat__first {
  padding-left: 13px;
  text-align: left;
}

.heat tbody th {
  padding: 0;
  font-size: 8px;
  line-height: 10px;
  text-align: left;
  font-weight: 700;
}

.heat tbody th span {
  display: block;
  padding-left: 13px;
}

.heat tbody th .spot {
  margin-left: 7px;
  padding-left: 6px;
  background: #fff;
  color: #111;
  border-radius: 3px 0 0 3px;
  clip-path: polygon(0 0, 90% 0, 100% 50%, 90% 100%, 0 100%);
}

.heat td {
  padding: 0 6px 0 0;
  font-size: 7px;
  font-weight: 700;
  line-height: 10px;
  text-align: right;
  color: #1f4d37;
}

.heat td:last-child {
  padding-right: 18px;
}

.heat .light {
  color: #cfe3e6;
}

.heat .king {
  color: #fff;
  box-shadow: inset 0 0 0 1px #8a35a8;
}

.star {
  font-size: 6px;
  line-height: 6px;
}

/* right: price chart */
.tv {
  position: relative;
  display: flex;
  flex-direction: column;
  min-width: 0;
  background: #000;
}

.tabs {
  display: flex;
  align-self: center;
  margin: 3px 0 10px;
  padding: 2px;
  border-radius: 11px;
  background: #242426;
}

.tabs__item {
  padding: 0 9px;
  border-radius: 9px;
  color: #a9a9ad;
  font-size: 9px;
  line-height: 17px;
  text-decoration: none;
}

.tabs__item.is-on {
  padding: 0 8px;
  background: #444448;
  color: #fff;
  font-weight: 600;
}

.chart {
  position: relative;
  flex: 1;
  min-height: 0;
  background: #161924;
}

.chart__svg {
  display: block;
  width: 100%;
  height: 100%;
}

.band {
  fill: #7e57c2;
  fill-opacity: 0.1;
}

.grid line {
  stroke: #a5adc8;
  stroke-opacity: 0.07;
}

.split {
  stroke: #2a2d39;
}

.dash {
  stroke: #6f7280;
  stroke-opacity: 0.7;
  stroke-dasharray: 3 3;
}

polyline,
.trend,
.sync path,
.approx,
.hex {
  fill: none;
}

.rsi {
  stroke: #6f4fb0;
  stroke-opacity: 0.85;
}

.rsi-ma {
  stroke: #d3b95f;
}

.vol {
  opacity: 0.6;
}

.vol .up {
  fill: #35786f;
}

.vol .down {
  fill: #a03e4a;
}

.vol-ma {
  stroke: #e8e8ea;
  stroke-width: 1.5;
}

.level {
  stroke: #c9b94c;
  stroke-width: 1.6;
}

.candle path {
  stroke-width: 0.8;
}

.candle.up {
  fill: #2f9c8c;
  stroke: #2f9c8c;
  stroke-width: 0;
}

.candle.down {
  fill: #e8475a;
  stroke: #e8475a;
  stroke-width: 0;
}

.gap-up {
  stroke: #6a8f86;
}

.ema {
  stroke: #45aec4;
  stroke-width: 1.2;
}

.trend {
  stroke: #f0f0f0;
  stroke-width: 1.5;
}

.mark text {
  font-size: 6px;
  font-weight: 700;
  text-anchor: middle;
}

.mark--d {
  fill: #0d1340;
  stroke: #2736a8;
}

.mark--d text {
  fill: #4b60ee;
  stroke: none;
}

.mark--e {
  fill: #07190f;
  stroke: #1d5a36;
}

.mark--e text {
  fill: #3d9a60;
  stroke: none;
}

.flash-bg {
  fill: #2a103d;
  stroke: #7b2fa0;
}

.flash {
  fill: #b04fe0;
  stroke: #b04fe0;
  stroke-width: 0.5;
}

.di-plus {
  stroke: #4c9450;
}

.di-minus {
  stroke: #b83a4b;
}

.adx {
  stroke: #2f4fc4;
}

.legend text {
  fill: #b4b6be;
  font-size: 7px;
}

.last {
  fill: #2c8f80;
  font-size: 7px;
}

.sync circle {
  fill: #3d2d73;
}

.sync path {
  stroke: #b9a8e8;
}

.approx {
  stroke: #e0417c;
}

.logo {
  fill: #e6e6e8;
}

.hex {
  stroke: #9a9ca5;
  stroke-width: 0.8;
}

.axis text {
  fill: #8b8d98;
  font-size: 7px;
}

.axis .strong {
  fill: #c0c2ca;
  font-weight: 600;
}

.months text {
  text-anchor: middle;
}

.tag text {
  font-size: 7px;
}

.currency {
  position: absolute;
  top: 114px;
  right: 2px;
  width: 32px;
  height: 14px;
  padding-left: 3px;
  border: 1px solid #26262a;
  border-radius: 2px;
  background: #0b0b0d;
  color: #c8c8cc;
  font-size: 7px;
  appearance: none;
}

.currency__chev {
  position: absolute;
  top: 120px;
  right: 4px;
  width: 5px;
  height: 4px;
  fill: none;
  stroke: #c8c8cc;
}

.fold {
  position: absolute;
  top: 180px;
  left: 4px;
  display: flex;
  align-items: center;
  justify-content: center;
  width: 18px;
  height: 14px;
  border: 1px solid #33363f;
  border-radius: 2px;
  background: #15181f;
  color: #c8c8cc;
}

.dock {
  display: flex;
  align-items: center;
  flex: none;
  height: 35px;
  padding-left: 6px;
  overflow: hidden;
  color: #e8e8e8;
}

.wheel {
  display: flex;
  flex-direction: column;
  width: 67px;
  margin-top: -8px;
  align-items: flex-start;
}

.wheel__ghost {
  color: #2c2c2e;
  font-size: 8px;
  line-height: 10px;
}

.wheel__cur {
  font-size: 9px;
  line-height: 14px;
}

.dock__tf {
  margin-bottom: 8px;
}

.dock__tools {
  display: flex;
  align-items: center;
  margin: 0 3px 8px auto;
}

.tool {
  display: flex;
  align-items: center;
  justify-content: center;
  box-sizing: border-box;
  width: 26px;
  height: 16px;
}

.tool--sep {
  width: 30px;
  padding-left: 4px;
  background: linear-gradient(#2a2a2c, #2a2a2c) 2px 3px / 1px 10px no-repeat;
}

.tool svg {
  width: 13px;
  height: 13px;
  fill: none;
  stroke: #dcdcde;
  stroke-width: 1.3;
  stroke-linecap: round;
  stroke-linejoin: round;
}

.tool--dim svg {
  stroke: #4a4a4c;
}

.tool .tool__dot {
  fill: #f0384a;
  stroke: none;
}

.drawer {
  position: absolute;
  right: 0;
  bottom: 7px;
  display: flex;
  align-items: center;
  justify-content: center;
  width: 12px;
  height: 51px;
  border-radius: 5px 0 0 5px;
  background: #3a3a3c;
}

.drawer svg {
  width: 6px;
  height: 16px;
  fill: none;
  stroke: #fff;
  stroke-width: 1.6;
}
</style>
